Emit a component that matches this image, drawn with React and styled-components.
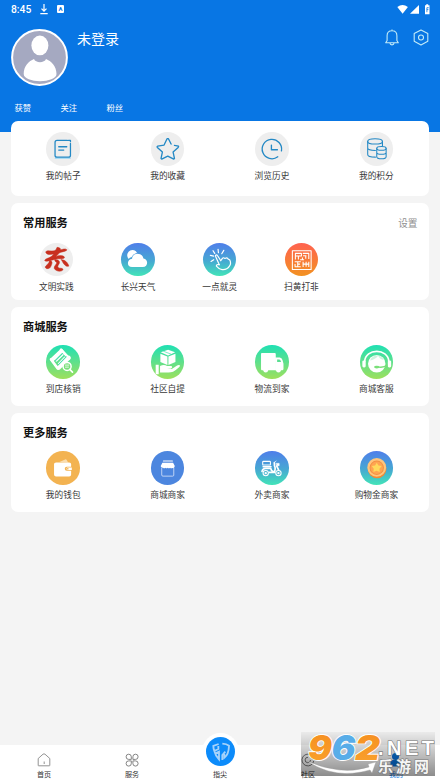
import React from 'react';
import styled, { createGlobalStyle } from 'styled-components';

const GlobalStyle = createGlobalStyle`
  * {
    box-sizing: border-box;
  }

  body {
    margin: 0;
    background: #f4f4f4;
    font-family: Roboto, "Noto Sans CJK SC", sans-serif;
  }

  svg {
    display: block;
    flex: none;
  }
`;

const BLUE = '#0876e4';
const LINE = '#2489c5';
const SKY = 'linear-gradient(#4f7eea, #46a9d2 55%, #42e4b8)';
const GREEN = 'linear-gradient(#1fe0b4, #5fe08c 50%, #9ee05c)';

/* every service drawing uses a 100 x 100 box */
const Draw = ({ children, ...props }) => (
  <svg width="100%" height="100%" viewBox="0 0 100 100" fill="none" strokeLinecap="round" strokeLinejoin="round" {...props}>
    {children}
  </svg>
);

const PostIcon = () => (
  <Draw stroke={LINE} strokeWidth="3.8">
    <path d="M28 78h44" stroke="#93d5f5" strokeWidth="4" />
    <path d="M64 25H33q-6 0-6 6v39q0 5 6 5h34q6 0 6-5V34" />
    <path d="M67 25h6v4M38 44h24M38 54h15" />
  </Draw>
);

const StarIcon = () => (
  <Draw stroke={LINE} strokeWidth="4">
    <path d="M70 40l12 2q1 2-1 4L66 60l4 19-2 2-18-9-18 9-2-2 4-19-15-14q-2-3 1-4l19-3 9-19h4l8 16" />
  </Draw>
);

const HistoryIcon = () => (
  <Draw stroke={LINE} strokeWidth="4">
    <path d="M79 56A29 29 0 1 0 68 74M49 39v14h18" />
  </Draw>
);

const PointsIcon = () => (
  <Draw stroke={LINE} strokeWidth="3.2">
    <ellipse cx="45" cy="28" rx="22" ry="8" />
    <path d="M23 28v39c0 5 9 8 23 8M67 28v14M23 48c0 4 9 7 23 7" />
    <ellipse cx="64" cy="49" rx="14" ry="5.5" />
    <path d="M50 49v25c0 8 28 8 28 0V49M50 61c0 7 28 7 28 0" />
  </Draw>
);

const ZhiIcon = () => (
  <Draw fill="#c8301f" stroke="#c8301f" strokeWidth="1.6">
    <path d="M18 25c5-5 15 1 25-2 7-2 5-6 8-10 6 0 11 3 10 7 7 0 14-5 19 0 0 5-12 5-21 9-5 4-8 7-11 11 12-4 25-3 25 4-4 5-17 1-29 5-11 2-21 7-28 5-6-3 3-7 11-10 8-3 11-7 14-11-8 1-17 4-23-3z" />
    <path d="M29 54c8-2 8 5 5 12-3 9-7 12-15 10-7-5-1-7 3-12 4-3 5-7 7-10z" />
    <path d="M45 50c10-1 16 5 12 12-3 5-6 8-2 12 5 3 10-1 14 5-4 8-21 6-26-2-3-8 7-13 7-18-1-3-8-4-5-9z" />
    <path d="M64 50c10-1 20 10 22 19-10 4-17-9-22-19z" />
  </Draw>
);

const WeatherIcon = () => (
  <Draw fill="#fff">
    <path d="M20 43a15 15 0 0 1 28-13c-10 2-14 7-16 12q-7 1-9 6z" />
    <path d="M33 72C16 71 17 49 33 47c1-20 30-20 34-1 15 1 15 26-2 26z" />
  </Draw>
);

const TapIcon = () => (
  <Draw stroke="#fff" strokeWidth="3.6">
    <path d="M38 41q-2-7 4-5 2 2 11 17l5-7q3-4 7 0l3-1q5-2 7 3l5 3q5 11-1 18-9 13-24 10-8-2-15-10-1-6 9-4l-2-4z" />
    <path d="M22 37l10 2M30 23l5 8M45 19l1 10M62 22l-6 10M24 55l8-5" />
  </Draw>
);

const SealIcon = () => (
  <Draw stroke="#fff" strokeWidth="3.2" strokeLinecap="butt">
    <rect x="22" y="23" width="56" height="56" />
    <path d="M31 49V31h18v8H31M40 40v9M53 31h18v17M54 38h10M62 38v9M52 43v8M45 50h12M29 56h18M38 57v14M29 71h18M45 63h-7M30 63v8M54 56v16M63 56v15M71 56v16M54 63h17" />
  </Draw>
);

const TicketIcon = () => (
  <Draw stroke="#fff">
    <path d="M19 43L46 18M38 68l30-30" strokeWidth="12" />
    <path d="M15 43l20 27M45 14l24 26" strokeWidth="8" />
    <path d="M31 46l18-17M39 56l17-18" strokeWidth="7" />
    <path d="M28 47l21-21M37 59l23-24" stroke="#35dda4" strokeWidth="3" />
    <circle cx="63" cy="64" r="12" fill="#78e07a" strokeWidth="4.5" />
    <path d="M58 60h10M58 66h9" strokeWidth="2.5" />
    <path d="M71 73l8 8" strokeWidth="5" />
  </Draw>
);

const PickupIcon = () => (
  <Draw fill="#fff">
    <path d="M29 22l22-8 21 8-21 9z" />
    <path d="M28 26l21 8v26l-21-9zM73 26l-21 8v26l21-9z" />
    <path d="M38 19l21 8" stroke="#44deb0" strokeWidth="2" />
    <path d="M14 59h9v28h-9z" />
    <path d="M27 63q12-6 21 0h13q5 4-1 7H48l14 2 16-11q7-3 9 1-3 6-21 18-9 3-18 2H27z" />
  </Draw>
);

const TruckIcon = () => (
  <Draw fill="#fff">
    <path d="M18 26q0-2 3-2h38q3 0 3 3v48H20q-2 0-2-3z" />
    <path d="M60 37h14q6 0 8 8l3 11v16q0 3-3 3H60z" />
    <path d="M66 43h7q3 0 5 8H66z" fill="#58df91" />
    <circle cx="32" cy="75" r="7" />
    <circle cx="70" cy="75" r="7" />
  </Draw>
);

const SupportIcon = () => (
  <Draw>
    <path d="M14 49C16 9 84 9 86 49" stroke="#fff" strokeWidth="5" />
    <rect x="7" y="46" width="10" height="21" rx="4" fill="#fff" />
    <rect x="83" y="46" width="10" height="21" rx="4" fill="#fff" />
    <circle cx="50" cy="56" r="26" fill="#fff" />
    <path d="M30 46C42 44 51 38 54 32c3 7 10 12 17 13-6-18-34-19-41 1z" fill="#5bdc92" opacity=".3" />
    <path d="M81 60q-9 8-25 6" stroke="#79df78" strokeWidth="4" />
    <ellipse cx="50" cy="66" rx="8" ry="4" fill="#79df78" />
  </Draw>
);

const WalletIcon = () => (
  <Draw fill="#fff">
    <path d="M40 33l17-8q3-1 5 2l4 7z" opacity=".55" />
    <path d="M24 39q0-5 6-5h39q6 0 6 5v8H62q-6 0-6 6t6 6h13v11q0 6-6 6H30q-6 0-6-6z" />
    <path d="M63 49h14v8H63q-4-4 0-8z" />
    <circle cx="65" cy="53" r="2.5" fill="#f3b351" />
  </Draw>
);

const StoreIcon = () => (
  <Draw>
    <path d="M37 30h27" stroke="#fff" strokeWidth="3" />
    <path d="M34 35h32l5 10q-1 8-7 6-5 2-7-1-4 3-7 0-4 3-7 0-4 3-7 0-7 1-7-5z" fill="#fff" />
    <path d="M32 52v20q0 3 4 3h29q3 0 3-3V52" stroke="#d9e5fa" strokeWidth="2.4" />
  </Draw>
);

const ScooterIcon = () => (
  <Draw stroke="#fff" strokeWidth="3.2">
    <rect x="23" y="31" width="23" height="11" rx="2" />
    <path d="M24 47h24" strokeWidth="4" />
    <path d="M21 61q2-9 11-9h15q2 10 9 10 5-1 4-13l-2-6V35" strokeWidth="5" />
    <path d="M56 35l7-5M64 37h8v7h-7z" fill="#fff" strokeWidth="2" />
    <path d="M65 45l6 13M43 64h16" strokeWidth="5" />
    <circle cx="32" cy="66" r="8" fill="#45b3ce" />
    <circle cx="70" cy="66" r="8" fill="#45b3ce" />
    <circle cx="32" cy="66" r="2" />
    <circle cx="70" cy="66" r="2" />
  </Draw>
);

const CoinIcon = () => (
  <Draw>
    <circle cx="51" cy="53" r="28" fill="#f28a35" />
    <circle cx="50" cy="49" r="28" fill="#ffc57c" />
    <circle cx="50" cy="50" r="20" fill="#ffa552" stroke="#f39142" strokeWidth="3" />
    <path d="M50 35l5 8 10 2-7 8 1 10-10-4-9 4 1-10-6-8 10-2z" fill="#ffda5c" />
  </Draw>
);

const shortcuts = [
  { name: '我的帖子', icon: PostIcon, bg: '#eee' },
  { name: '我的收藏', icon: StarIcon, bg: '#eee' },
  { name: '浏览历史', icon: HistoryIcon, bg: '#eee' },
  { name: '我的积分', icon: PointsIcon, bg: '#eee' },
];

const common = [
  { name: '文明实践', icon: ZhiIcon, bg: '#eee' },
  { name: '长兴天气', icon: WeatherIcon, bg: SKY },
  { name: '一点就灵', icon: TapIcon, bg: SKY },
  { name: '扫黄打非', icon: SealIcon, bg: 'linear-gradient(#ff6250, #f29222)' },
];

const mall = [
  { name: '到店核销', icon: TicketIcon, bg: GREEN },
  { name: '社区自提', icon: PickupIcon, bg: GREEN },
  { name: '物流到家', icon: TruckIcon, bg: GREEN },
  { name: '商城客服', icon: SupportIcon, bg: GREEN },
];

const more = [
  { name: '我的钱包', icon: WalletIcon, bg: '#f3b351' },
  { name: '商城商家', icon: StoreIcon, bg: '#4c86df' },
  { name: '外卖商家', icon: ScooterIcon, bg: SKY },
  { name: '购物金商家', icon: CoinIcon, bg: SKY },
];

function Services({ items, compact }) {
  return (
    <Grid $compact={compact}>
      {items.map(({ name, icon: Icon, bg }) => (
        <Service key={name} $compact={compact}>
          <Circle $bg={bg}><Icon /></Circle>
          <span>{name}</span>
        </Service>
      ))}
    </Grid>
  );
}

function StatusBar() {
  return (
    <Status>
      <Clock>8:45</Clock>
      <svg width="8" height="11" viewBox="0 0 8 11" fill="none" stroke="#fff" strokeWidth="1.2">
        <path d="M4 0v7M1.5 4.7L4 7.2l2.5-2.5M.3 9.7h7.4" />
      </svg>
      <Keyboard>A</Keyboard>
      <Signals width="34" height="11" viewBox="0 0 34 11" fill="#fff">
        <path d="M.3 3Q5.5-.8 10.9 3L5.6 9.7zM13 9.7l9-8.7v8.7z" />
        <path d="M28 1.3h1.2V.3h2v1h1.3v9H28z" />
        <path d="M31.7 3.7h-1.8v4.500M29.9 5.6h1.5" stroke={BLUE} strokeWidth=".8" fill="none" />
      </Signals>
    </Status>
  );
}

function Profile() {
  return (
    <User>
      <svg width="57" height="57" viewBox="0 0 57 57">
        <circle cx="28.5" cy="28.5" r="27.4" fill="#a5a9c1" stroke="#fff" strokeWidth="2" />
        <ellipse cx="28.9" cy="16.4" rx="8.5" ry="9.9" fill="#fff" />
        <path d="M12.7 45C12.7 37 18 32 23 30c1.5 4.200 10.5 4.200 12 0 5 2 10.5 7 10.5 15 0 9.500-32.8 9.500-32.8 0z" fill="#fff" />
      </svg>
      <UserName>未登录</UserName>
      <Actions>
        <svg width="14" height="17" viewBox="0 0 14 17" fill="none" stroke="#c2ebf8" strokeWidth="1.1" strokeLinejoin="round">
          <path d="M7 .4v1.200M.7 13.7h12.6l-1.4-2.2V6.800C11.9 3.800 10 1.800 7 1.800S2.1 3.800 2.100 6.800v4.700zM4.900 13.900q.2 2 2.100 2t2.100-2" />
        </svg>
        <svg width="16" height="17" viewBox="0 0 16 17" fill="none" stroke="#c2ebf8" strokeWidth="1.1" strokeLinejoin="round">
          <path d="M8 1l6.800 3.600v7.700L8 16l-6.800-3.700V4.600z" />
          <circle cx="8" cy="8.5" r="2.5" />
        </svg>
      </Actions>
    </User>
  );
}

function TabBar() {
  return (
    <Tabs>
      <Tab>
        <svg width="14" height="14" viewBox="0 0 14 14" fill="none" stroke="#777" strokeWidth=".8" strokeLinejoin="round">
          <path d="M1.200 5.500L6 1.200q1-.7 2 0l4.800 4.300v6.800q0 .5-.5.5H1.700q-.5 0-.5-.5zM7.200 8.500v2.500" />
        </svg>
        首页
      </Tab>
      <Tab>
        <svg width="14" height="14" viewBox="0 0 14 14" fill="none" stroke="#777" strokeWidth=".9">
          <path d="M6.300 6.400H3.700a2.600 2.600 0 1 1 2.600-2.600zM7.900 6.400V3.800a2.600 2.600 0 1 1 2.600 2.600zM6.300 7.900v2.500a2.600 2.600 0 1 1-2.600-2.500zM7.900 7.900h2.600a2.600 2.600 0 1 1-2.600 2.600z" />
        </svg>
        服务
      </Tab>
      <Tab>
        <Center>
          <svg width="29" height="29" viewBox="0 0 87 87" fill="none">
            <circle cx="43.5" cy="43.5" r="43.5" fill="#0c8bfa" />
            <path d="M38 21l-16 6q0 8 3 15l12-6v-9M25 42q3 13 14 25V44l-12 6M49 20q13 1 20 6-1 27-14 36V46M49 69V54l9-10" stroke="#a5d2fa" strokeWidth="5.5" />
          </svg>
        </Center>
        指尖
      </Tab>
      <Tab>
        <svg width="14" height="14" viewBox="0 0 14 14" fill="none" stroke="#555" strokeWidth=".8">
          <path d="M12.700 8A5.900 5.900 0 1 1 10.800 2.600M9.500 7A2.700 2.700 0 1 1 7 4.300" />
        </svg>
        社区
      </Tab>
      <Tab $active>
        <svg width="14" height="14" viewBox="0 0 14 14" fill="#0874df">
          <circle cx="6.5" cy="3.5" r="3.5" />
          <path d="M1.500 13.500V9q0-2 2-2h6q2 0 2 2v4.500z" />
        </svg>
        我的
      </Tab>
    </Tabs>
  );
}

function SiteMark() {
  return (
    <Mark width="134" height="44" viewBox="0 0 134 44">
      <defs>
        <linearGradient id="shade" x2="0" y2="1">
          <stop offset="0" stopColor="#000" stopOpacity=".04" />
          <stop offset="1" stopColor="#000" stopOpacity=".45" />
        </linearGradient>
        <linearGradient id="orange" x2="0" y2="1">
          <stop offset="0" stopColor="#f58d20" />
          <stop offset="1" stopColor="#faa32d" />
        </linearGradient>
      </defs>
      <rect width="134" height="44" fill="url(#shade)" />
      <path d="M6 29q34 15 62 6l-1-3 8-2-4 11-2-3Q34 48 6 29z" fill="#fff" stroke="#999" strokeWidth=".4" />
      <g fontFamily="Inter" fontWeight="900" fontStyle="italic" fontSize="34" stroke="#fff" strokeWidth="1.8" paintOrder="stroke">
        <text x="7" y="28" textLength="24" lengthAdjust="spacingAndGlyphs" fill="url(#orange)">9</text>
        <text x="30.5" y="28" textLength="24" lengthAdjust="spacingAndGlyphs" fill="#58ade8">6</text>
        <text x="54" y="28" textLength="25" lengthAdjust="spacingAndGlyphs" fill="url(#orange)">2</text>
      </g>
      <g fill="#fff" stroke="#777" strokeWidth="1.2" paintOrder="stroke" fontWeight="700">
        <text x="77" y="22.500" fontFamily="Liberation Sans" fontSize="20" textLength="56">.NET</text>
        <text x="77" y="39.500" fontFamily="Noto Sans CJK SC" fontSize="15" textLength="51" opacity=".9">乐游网</text>
      </g>
    </Mark>
  );
}

function App() {
  return (
    <Page>
      <GlobalStyle />
      <Header>
        <StatusBar />
        <Profile />
        <Stats>
          <span>获赞</span>
          <span>关注</span>
          <span>粉丝</span>
        </Stats>
      </Header>
      <Content>
        <Card $height={75} $top={11}>
          <Services items={shortcuts} />
        </Card>
        <Card $height={96.6} $top={12.6}>
          <CardHead><h3>常用服务</h3><span>设置</span></CardHead>
          <Services items={common} compact />
        </Card>
        <Card $height={98.6} $top={12.6}>
          <CardHead $tight><h3>商城服务</h3></CardHead>
          <Services items={mall} />
        </Card>
        <Card $height={98.6} $top={12.6}>
          <CardHead $tight><h3>更多服务</h3></CardHead>
          <Services items={more} />
        </Card>
      </Content>
      <TabBar />
      <SiteMark />
    </Page>
  );
}

const Page = styled.div`
  position: relative;
  display: flex;
  flex-direction: column;
  width: 440px;
  height: 782px;
  overflow: hidden;
  background: #f4f4f4;
`;

const Header = styled.header`
  height: 132px;
  flex: none;
  background: ${BLUE};
  color: #fff;
`;

const Status = styled.div`
  display: flex;
  align-items: center;
  height: 18px;
  padding: 0 8px 0 11px;
`;

const Clock = styled.span`
  width: 29px;
  font-size: 10.3px;
  font-weight: 500;
`;

const Keyboard = styled.span`
  width: 7px;
  height: 8px;
  margin-left: 9px;
  border-radius: 1px;
  background: #fff;
  color: ${BLUE};
  font-size: 6px;
  font-weight: 700;
  line-height: 8px;
  text-align: center;
`;

const Signals = styled.svg`
  margin-left: auto;
  margin-right: 1px;
`;

const User = styled.div`
  display: flex;
  align-items: flex-start;
  padding: 11px 11px 0;
`;

const UserName = styled.div`
  margin-left: 9px;
  font-size: 14px;
  line-height: 20px;
`;

const Actions = styled.div`
  display: flex;
  gap: 14px;
  margin-left: auto;
`;

const Stats = styled.div`
  display: flex;
  padding: 16px 0 0 14.5px;

  span {
    width: 46px;
    font-size: 8.3px;
    line-height: 12px;
  }
`;

const Content = styled.main`
  display: flex;
  flex: 1;
  flex-direction: column;
  gap: 7.3px;
  margin-top: -11px;
  padding: 0 11px;
`;

const Card = styled.section`
  height: ${({ $height }) => $height}px;
  padding-top: ${({ $top }) => $top}px;
  border-radius: 7px;
  background: #fff;
`;

const CardHead = styled.div`
  display: flex;
  justify-content: space-between;
  height: ${({ $tight }) => ($tight ? 25.5 : 27)}px;
  padding: 0 11.5px 0 12px;
  line-height: 15px;

  h3 {
    margin: 0;
    color: #111;
    font-size: 11.2px;
    font-weight: 700;
  }

  span {
    color: #909090;
    font-size: 9.7px;
  }
`;

const Grid = styled.div`
  display: grid;
  grid-template-columns: repeat(4, ${({ $compact }) => ($compact ? 81.7 : 104.4)}px);
  padding-left: ${({ $compact }) => ($compact ? 4.5 : 0)}px;
`;

const Service = styled.div`
  display: flex;
  flex-direction: column;
  align-items: center;

  span {
    margin-top: ${({ $compact }) => ($compact ? 5 : 4.4)}px;
    color: #383838;
    font-size: 8.7px;
    line-height: 13px;
    white-space: nowrap;
  }
`;

const Circle = styled.div`
  width: 33.5px;
  height: 33.5px;
  overflow: hidden;
  border-radius: 50%;
  background: ${({ $bg }) => $bg};
`;

const Tabs = styled.nav`
  display: flex;
  height: 37px;
  flex: none;
  background: #fff;
`;

const Tab = styled.div`
  display: flex;
  flex: 1;
  flex-direction: column;
  align-items: center;
  justify-content: flex-end;
  gap: 3px;
  padding-bottom: 2.5px;
  color: ${({ $active }) => ($active ? '#0874df' : '#333')};
  font-size: 7.1px;
  line-height: 10px;
`;

const Center = styled.div`
  display: flex;
  align-items: center;
  justify-content: center;
  width: 37px;
  height: 37px;
  flex: none;
  margin-bottom: -3.5px;
  border-radius: 50%;
  background: #fff;
`;

/* sits over the last two tabs */
const Mark = styled.svg`
  position: absolute;
  right: 5px;
  bottom: 6px;
  overflow: visible;
`;

export default App;
